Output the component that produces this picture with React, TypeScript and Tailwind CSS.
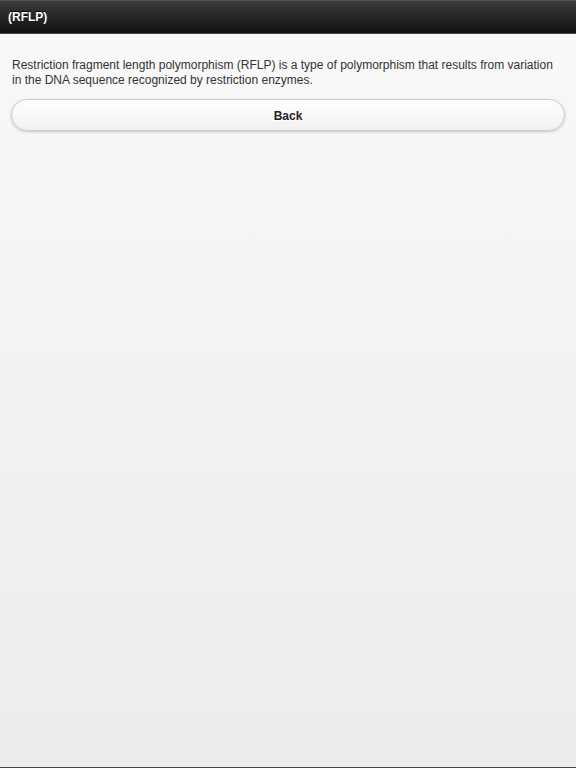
import React from "react";

export default function App() {
  return (
    <div className="w-[576px] h-[768px] flex flex-col bg-gradient-to-b from-[#f9f9f9] to-[#ececec] font-['Liberation_Sans',Arial,sans-serif] overflow-hidden">
      <div className="h-[34px] shrink-0 flex items-center px-[8px] bg-gradient-to-b from-[#3c3c3c] to-[#111111] border-t border-t-[#555] border-b border-b-[#4a4a4a]">
        <span className="text-white font-bold text-[12px] [text-shadow:0_-1px_0_#000]">(RFLP)</span>
      </div>
      <div className="flex-1 flex flex-col px-[11px] pt-[24px]">
        <p className="px-[1px] text-[12px] leading-[15px] text-[#333]">
          Restriction fragment length polymorphism (RFLP) is a type of polymorphism that results from variation in the DNA sequence recognized by restriction enzymes.
        </p>
        <button className="mt-[11px] h-[32px] pt-[2px] w-full rounded-full border border-[#cccccc] bg-gradient-to-b from-white to-[#f1f1f1] shadow-[0_1px_3px_rgba(0,0,0,0.2)] text-[12px] font-bold text-[#222] [text-shadow:0_1px_0_#fff]">
          Back
        </button>
      </div>
      <div className="h-px shrink-0 bg-[#444]" />
    </div>
  );
}
